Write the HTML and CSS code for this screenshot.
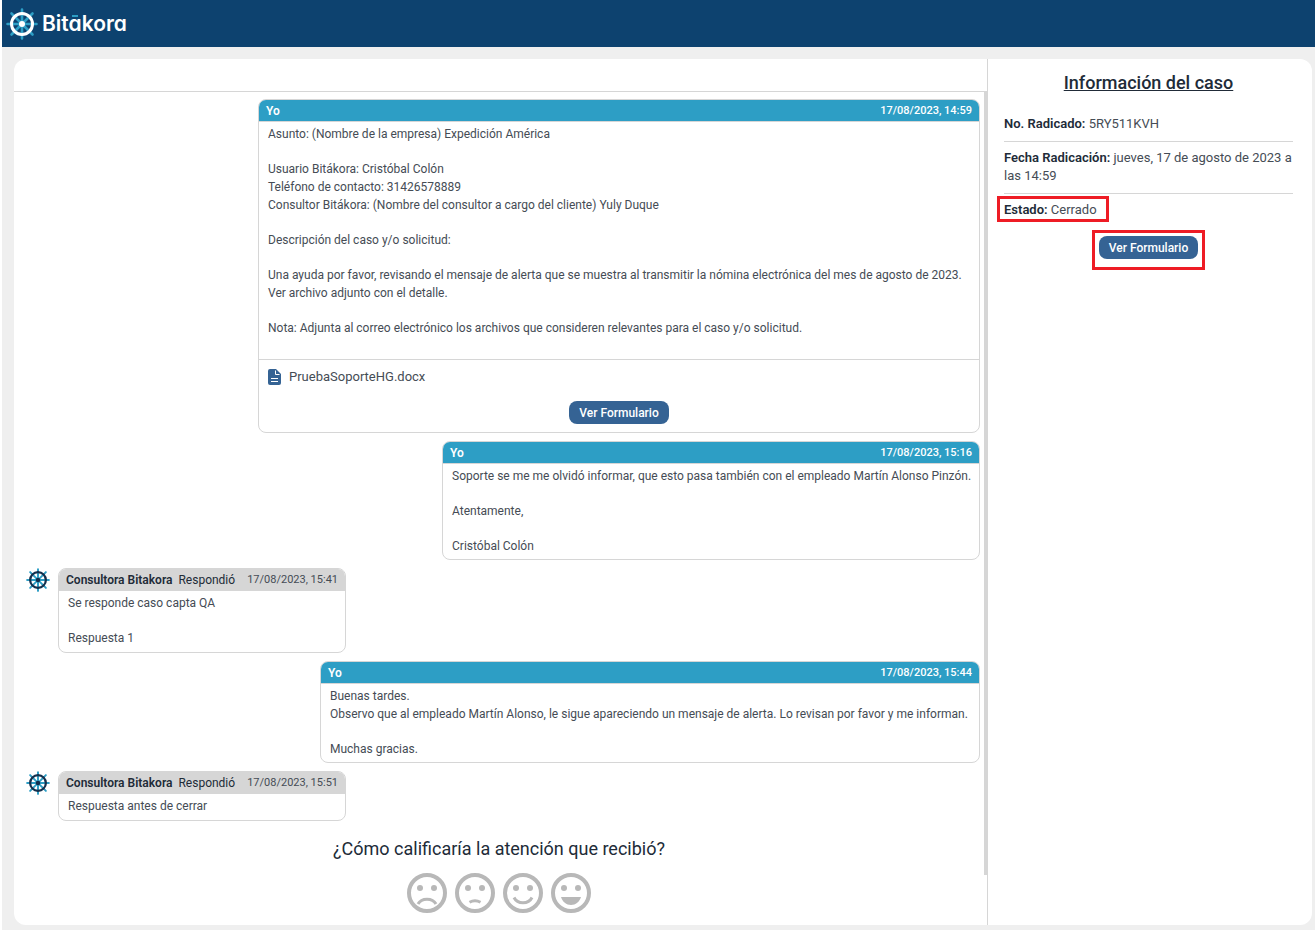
FILE: index.html
```html
<!DOCTYPE html>
<html lang="es">
<head>
<meta charset="utf-8">
<title>Bitākora</title>
<link rel="stylesheet" href="styles.css">
</head>
<body>
<svg class="defs" aria-hidden="true">
  <symbol id="wheel" viewBox="0 0 32 32">
    <g class="spokes" stroke-width="2.600" stroke-linecap="round">
      <path d="M16 1.500v29M1.500 16h29M5.500 5.500l21 21M26.500 5.500l-21 21"/>
    </g>
    <circle class="rim" cx="16" cy="16" r="10.500" fill="none" stroke-width="3"/>
    <circle class="hub" cx="16" cy="16" r="3"/>
  </symbol>
</svg>
<header class="topbar">
  <svg class="wheel wheel-light" aria-hidden="true"><use href="#wheel"/></svg>
  <span class="brand">Bit<span class="macron">a</span>kora</span>
</header>
<div class="app">
  <main class="chat">
    <div class="chat-bar"></div>
    <div class="chat-body">
      <div class="messages">
        <article class="message mine size-l">
          <header class="message-head"><strong>Yo</strong><time>17/08/2023, 14:59</time></header>
          <div class="message-text message-long">
            <p>Asunto: (Nombre de la empresa) Expedición América</p>
            <p>Usuario Bitákora: Cristóbal Colón<br>Teléfono de contacto: 31426578889<br>Consultor Bitákora: (Nombre del consultor a cargo del cliente) Yuly Duque</p>
            <p>Descripción del caso y/o solicitud:</p>
            <p>Una ayuda por favor, revisando el mensaje de alerta que se muestra al transmitir la nómina electrónica del mes de agosto de 2023.<br>Ver archivo adjunto con el detalle.</p>
            <p>Nota: Adjunta al correo electrónico los archivos que consideren relevantes para el caso y/o solicitud.</p>
          </div>
          <footer class="attachments">
            <a class="file" href="#">
              <svg class="file-icon" viewBox="0 0 13 16" aria-hidden="true"><path class="sheet" d="M2 0h6l5 5v9a2 2 0 0 1-2 2H2a2 2 0 0 1-2-2V2a2 2 0 0 1 2-2z"/><path class="marks" d="M7.500 1.500V5.500H11.500M3 9.500h7M3 12.500h7"/></svg>
              <span>PruebaSoporteHG.docx</span>
            </a>
            <button class="btn" type="button">Ver Formulario</button>
          </footer>
        </article>

        <article class="message mine size-m">
          <header class="message-head"><strong>Yo</strong><time>17/08/2023, 15:16</time></header>
          <div class="message-text">
            <p>Soporte se me me olvidó informar, que esto pasa también con el empleado Martín Alonso Pinzón.</p>
            <p>Atentamente,</p>
            <p>Cristóbal Colón</p>
          </div>
        </article>

        <div class="reply">
          <svg class="wheel wheel-dark" aria-hidden="true"><use href="#wheel"/></svg>
          <article class="message theirs">
            <header class="message-head"><span class="author"><strong>Consultora Bitakora</strong><span>Respondió</span></span><time>17/08/2023, 15:41</time></header>
            <div class="message-text">
              <p>Se responde caso capta QA</p>
              <p>Respuesta 1</p>
            </div>
          </article>
        </div>

        <article class="message mine size-n">
          <header class="message-head"><strong>Yo</strong><time>17/08/2023, 15:44</time></header>
          <div class="message-text">
            <p>Buenas tardes.<br>Observo que al empleado Martín Alonso, le sigue apareciendo un mensaje de alerta. Lo revisan por favor y me informan.</p>
            <p>Muchas gracias.</p>
          </div>
        </article>

        <div class="reply">
          <svg class="wheel wheel-dark" aria-hidden="true"><use href="#wheel"/></svg>
          <article class="message theirs">
            <header class="message-head"><span class="author"><strong>Consultora Bitakora</strong><span>Respondió</span></span><time>17/08/2023, 15:51</time></header>
            <div class="message-text">
              <p>Respuesta antes de cerrar</p>
            </div>
          </article>
        </div>

        <section class="rating">
          <h2>¿Cómo calificaría la atención que recibió?</h2>
          <div class="faces">
            <button type="button" aria-label="Muy mala"><svg viewBox="0 0 40 40"><circle class="ring" cx="20" cy="20" r="18"/><circle cx="13" cy="15" r="3"/><circle cx="27" cy="15" r="3"/><path class="line" d="M11 31C14.500 24.500 25.500 24.500 29 31"/></svg></button>
            <button type="button" aria-label="Mala"><svg viewBox="0 0 40 40"><circle class="ring" cx="20" cy="20" r="18"/><circle cx="13" cy="15" r="3"/><circle cx="27" cy="15" r="3"/><path class="line" d="M14.500 29.200Q20 26.200 25.500 29.200"/></svg></button>
            <button type="button" aria-label="Buena"><svg viewBox="0 0 40 40"><circle class="ring" cx="20" cy="20" r="18"/><circle cx="13" cy="15" r="3"/><circle cx="27" cy="15" r="3"/><path class="line" d="M11 24.500C14.500 31.500 25.500 31.500 29 24.500"/></svg></button>
            <button type="button" aria-label="Muy buena"><svg viewBox="0 0 40 40"><circle class="ring" cx="20" cy="20" r="18"/><circle cx="13" cy="15" r="3"/><circle cx="27" cy="15" r="3"/><path d="M10 24H30C28.500 28.800 24.700 32 20 32S11.500 28.800 10 24z"/></svg></button>
          </div>
        </section>
      </div>
      <div class="scroll-track"><div class="scroll-thumb"></div></div>
    </div>
  </main>

  <aside class="case">
    <h1>Información del caso</h1>
    <p class="case-row"><strong>No. Radicado:</strong> 5RY511KVH</p>
    <p class="case-row"><strong>Fecha Radicación:</strong> jueves, 17 de agosto de 2023 a las 14:59</p>
    <p class="case-row"><span class="marked marked-state"><strong>Estado:</strong> Cerrado</span></p>
    <div class="case-action"><span class="marked"><button class="btn" type="button">Ver Formulario</button></span></div>
  </aside>
</div>
</body>
</html>
```
FILE: styles.css
```css
* { box-sizing: border-box; }

body {
  margin: 0;
  min-height: 100vh;
  display: flex;
  flex-direction: column;
  border-left: 2px solid #fff;
  background: #efefef;
  color: #454c55;
  font: 13px/18px Roboto, "Noto Sans", sans-serif;
}

h1, h2, p { margin: 0; }
strong { font-weight: 600; color: #212b38; }
button { font: inherit; cursor: pointer; }
.defs { position: absolute; width: 0; height: 0; }

/* Top bar */
.topbar {
  display: flex;
  align-items: center;
  gap: 4px;
  height: 47px;
  padding-left: 4px;
  background: #0d426f;
}
.brand {
  color: #fff;
  font: 600 21px/24px Inter, sans-serif;
  font-feature-settings: "cv11";
}
.macron { position: relative; }
.macron::after {
  content: "";
  position: absolute;
  left: 3px;
  top: 4px;
  width: 6px;
  height: 2px;
  background: #2d9ec5;
}
.wheel { flex: none; width: 24px; height: 24px; stroke: #2d9ec5; }
.wheel-light { width: 32px; height: 32px; }
.rim { stroke: var(--wheel); }
.hub { fill: var(--wheel); stroke: none; }
.wheel-light { --wheel: #fff; }
.wheel-dark { --wheel: #14304d; }

/* Layout */
.app {
  flex: 1;
  display: grid;
  grid-template-columns: 1fr 325px;
  padding: 12px 3px 5px 12px;
}
.chat {
  display: flex;
  flex-direction: column;
  background: #fff;
  border-radius: 12px 0 0 12px;
}
.chat-bar { height: 33px; border-bottom: 1px solid #d6d6d6; }
.chat-body { flex: 1; display: flex; }
.messages {
  flex: 1;
  display: flex;
  flex-direction: column;
  gap: 8px;
  padding: 7px 4px 0;
}
.scroll-track { width: 3px; }
.scroll-thumb { height: 94%; background: #d6d6d6; }

/* Messages */
.message {
  border: 1px solid #d6d6d6;
  border-radius: 8px;
  overflow: hidden;
  max-width: 100%;
  font-size: 12px;
}
.mine { align-self: flex-end; }
.size-l { width: 722px; }
.size-n { width: 660px; }
.size-m { width: 538px; }
.theirs { width: 288px; }
.reply { display: flex; gap: 8px; padding-left: 8px; }
.message-head {
  display: flex;
  justify-content: space-between;
  align-items: center;
  height: 22px;
  padding: 0 7px;
  background: #d6d6d6;
  white-space: nowrap;
}
.message-head time { font-size: 11px; }
.mine .message-head { background: #2d9ec5; color: #fff; border-bottom: 1px solid #d6d6d6; }
.mine strong { color: #fff; }
.mine time { font-weight: 500; }
.author { display: flex; gap: 6px; color: #212b38; }
.message-text {
  display: flex;
  flex-direction: column;
  gap: 17px;
  padding: 3px 0 4px 9px;
  white-space: nowrap;
}
.theirs .message-text { padding-bottom: 5px; }
.message-long { padding-bottom: 22px; }

.attachments {
  display: flex;
  flex-direction: column;
  align-items: center;
  gap: 15px;
  padding: 8px 9px;
  border-top: 1px solid #d6d6d6;
}
.file {
  align-self: flex-start;
  display: flex;
  align-items: center;
  gap: 8px;
  color: inherit;
  text-decoration: none;
  font-size: 13px;
}
.file-icon { width: 13px; height: 16px; }
.sheet { fill: #356394; }
.marks { fill: none; stroke: #fff; stroke-width: 1; }

.btn {
  height: 23px;
  padding: 0 10px;
  border: 0;
  border-radius: 8px;
  background: #356394;
  color: #fff;
  font-size: 12px;
  font-weight: 500;
  white-space: nowrap;
}

/* Rating */
.rating {
  display: flex;
  flex-direction: column;
  align-items: center;
  gap: 12px;
  padding: 8px 0 12px;
}
.rating h2 { font-size: 18px; line-height: 24px; font-weight: 400; color: #212b38; }
.faces { display: flex; gap: 8px; }
.faces button {
  width: 40px;
  height: 40px;
  padding: 0;
  border: 0;
  background: none;
  fill: #b8b8b8;
}
.faces svg { display: block; }
.ring, .line { fill: none; stroke: #b8b8b8; }
.ring { stroke-width: 4; }
.line { stroke-width: 3; }

/* Case details */
.case {
  padding: 12px 19px 12px 16px;
  border-left: 1px solid #d6d6d6;
  border-radius: 0 12px 12px 0;
  background: #fff;
}
.case h1 {
  margin-bottom: 20px;
  font-size: 18px;
  line-height: 24px;
  font-weight: 500;
  text-align: center;
  text-decoration: underline;
  color: #212b38;
}
.case-row { padding-bottom: 8px; }
.case-row + .case-row { padding-top: 7px; border-top: 1px solid #d6d6d6; }
.case-action { display: flex; justify-content: center; padding-top: 9px; }
.marked { position: relative; }
.marked::after {
  content: "";
  position: absolute;
  inset: -6px -7px -11px;
  border: 3px solid #ee1c25;
  pointer-events: none;
}
.marked-state::after { inset: -6px -12px -5px -7px; }
```
